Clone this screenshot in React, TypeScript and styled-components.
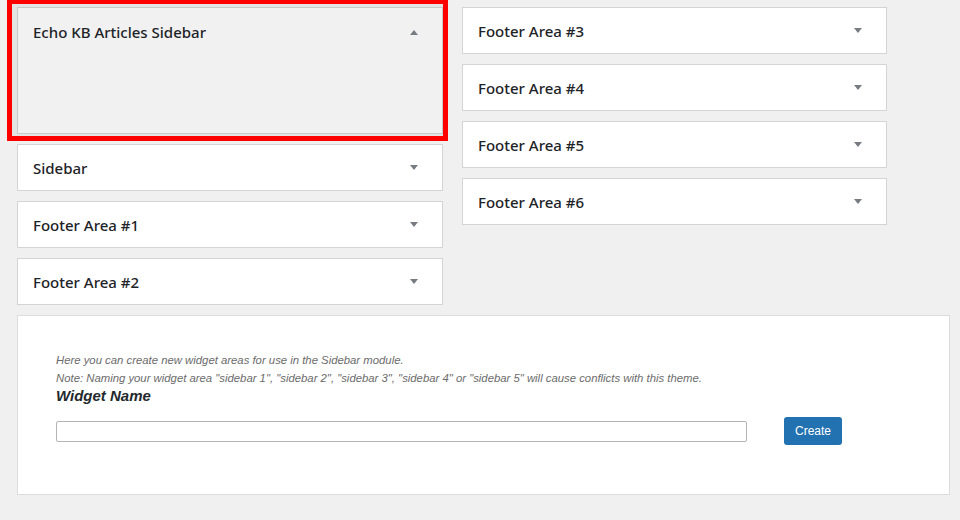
import React from 'react'
import styled, { createGlobalStyle } from 'styled-components'

const GlobalStyle = createGlobalStyle`
  html, body {
    margin: 0;
    padding: 0;
    background: #f0f0f1;
    overflow: hidden;
  }
`

const leftAreas = ['Sidebar', 'Footer Area #1', 'Footer Area #2']
const rightAreas = ['Footer Area #3', 'Footer Area #4', 'Footer Area #5', 'Footer Area #6']

const Arrow = ({ up }: { up?: boolean }) => (
    <StyledArrow viewBox="0 0 8 5" up={up ? 1 : 0}>
        <polygon points="0,0 8,0 4,5" fill="#787c82" />
    </StyledArrow>
)

const AreaCard = ({ title }: { title: string }) => (
    <StyledCard>
        <CardTitle>{title}</CardTitle>
        <Arrow />
    </StyledCard>
)

const App = () => {
    return (
        <Page>
            <GlobalStyle />
            <Columns>
                <Column>
                    <Highlighted>
                        <RedFrame />
                        <OpenCard>
                            <CardTitle>Echo KB Articles Sidebar</CardTitle>
                            <Arrow up />
                        </OpenCard>
                    </Highlighted>
                    {leftAreas.map((t) => (
                        <AreaCard key={t} title={t} />
                    ))}
                </Column>
                <Column>
                    {rightAreas.map((t) => (
                        <AreaCard key={t} title={t} />
                    ))}
                </Column>
            </Columns>
            <CreatePanel>
                <Note>Here you can create new widget areas for use in the Sidebar module.</Note>
                <Note>
                    Note: Naming your widget area "sidebar 1", "sidebar 2", "sidebar 3", "sidebar 4" or "sidebar 5" will cause conflicts with this theme.
                </Note>
                <FieldLabel>Widget Name</FieldLabel>
                <FormRow>
                    <NameInput type="text" />
                    <CreateButton>Create</CreateButton>
                </FormRow>
            </CreatePanel>
        </Page>
    )
}

const Page = styled.div`
  width: 960px;
  height: 520px;
  box-sizing: border-box;
  padding: 7px 10px 0 17px;
`
const Columns = styled.div`
  display: grid;
  grid-template-columns: 426px 425px;
  column-gap: 19px;
  align-items: start;
`
const Column = styled.div`
  display: flex;
  flex-direction: column;
  gap: 10px;
`
const StyledCard = styled.div`
  position: relative;
  height: 47px;
  box-sizing: border-box;
  display: flex;
  align-items: center;
  justify-content: space-between;
  padding: 0 24px 0 15px;
  background: #fff;
  border: 1px solid #d4d4d6;
`
const Highlighted = styled.div`
  position: relative;
`
const OpenCard = styled(StyledCard)`
  height: 127px;
  align-items: flex-start;
  padding-top: 14px;
  background: #f1f1f1;
  border-color: #c9c9cb;
`
const RedFrame = styled.div`
  position: absolute;
  top: -8px;
  left: -10px;
  right: -5px;
  bottom: -7px;
  border: 5px solid #ff0000;
  background: #e4e4e4;
`
const CardTitle = styled.div`
  font-family: 'Noto Sans', 'Open Sans', sans-serif;
  font-size: 15px;
  font-weight: 500;
  color: #1d2327;
  line-height: 20px;
`
const StyledArrow = styled.svg<{ up: number }>`
  width: 8px;
  height: 5px;
  flex: none;
  margin-top: ${(p) => (p.up ? '8px' : '0')};
  transform: ${(p) => (p.up ? 'rotate(180deg)' : 'none')};
`
const CreatePanel = styled.div`
  margin-top: 10px;
  width: 933px;
  height: 180px;
  box-sizing: border-box;
  padding: 35px 38px 0 38px;
  background: #fff;
  border: 1px solid #dcdcde;
`
const Note = styled.p`
  margin: 0;
  font-family: 'Liberation Sans', Arial, sans-serif;
  font-size: 11.33px;
  font-style: italic;
  line-height: 18px;
  color: #6b6b6b;
`
const FieldLabel = styled.div`
  font-family: 'Liberation Sans', Arial, sans-serif;
  font-size: 15px;
  font-weight: bold;
  font-style: italic;
  color: #23282d;
  line-height: 18px;
`
const FormRow = styled.div`
  display: flex;
  align-items: center;
  gap: 37px;
  margin-top: 12px;
`
const NameInput = styled.input`
  width: 691px;
  height: 21px;
  box-sizing: border-box;
  margin: 0;
  border: 1px solid #b4b4b4;
  border-radius: 2px;
  background: #fff;
  outline: none;
`
const CreateButton = styled.button`
  width: 58px;
  height: 28px;
  padding: 0;
  border: none;
  border-radius: 3px;
  background: #2271b1;
  color: #fff;
  font-family: 'Liberation Sans', Arial, sans-serif;
  font-size: 12px;
  cursor: pointer;
`

export default App
